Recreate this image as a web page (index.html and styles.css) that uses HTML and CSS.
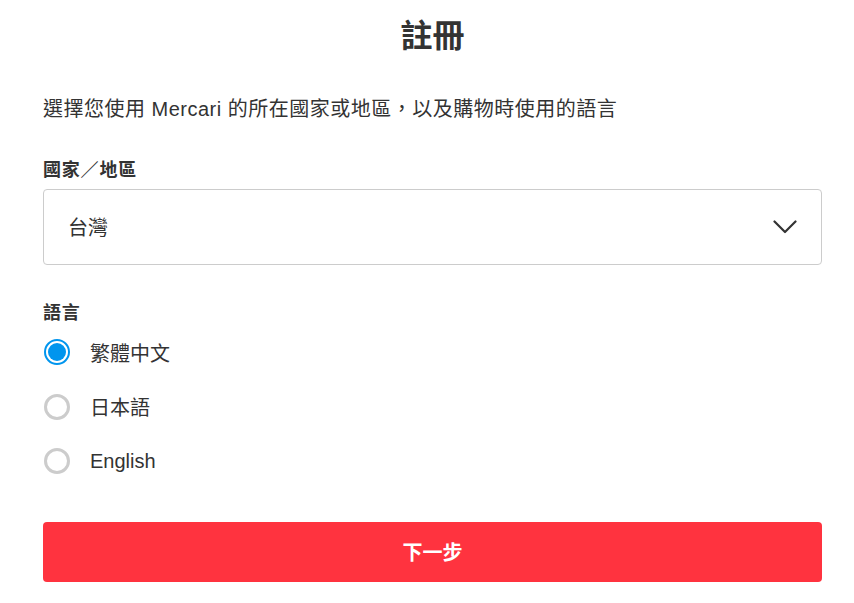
FILE: index.html
```html
<!DOCTYPE html>
<html lang="zh-Hant">
<head>
<meta charset="utf-8">
<title>註冊</title>
<link rel="stylesheet" href="styles.css">
</head>
<body>
<main class="page">
  <h1 class="title">註冊</h1>
  <p class="desc">選擇您使用 Mercari 的所在國家或地區，以及購物時使用的語言</p>

  <div class="field">
    <div class="label">國家／地區</div>
    <div class="select">
      <span class="select-value">台灣</span>
      <svg class="chevron" width="24" height="14" viewBox="0 0 24 14" aria-hidden="true">
        <path d="M1.5 1.5 L12 12 L22.5 1.5" fill="none" stroke="#333" stroke-width="2.2" stroke-linecap="round" stroke-linejoin="round"/>
      </svg>
    </div>
  </div>

  <div class="field lang">
    <div class="label">語言</div>
    <ul class="radios">
      <li class="radio-row"><span class="radio checked"></span><span class="radio-text">繁體中文</span></li>
      <li class="radio-row"><span class="radio"></span><span class="radio-text">日本語</span></li>
      <li class="radio-row"><span class="radio"></span><span class="radio-text">English</span></li>
    </ul>
  </div>

  <button class="next" type="button">下一步</button>
</main>
</body>
</html>
```
FILE: styles.css
```css
* { box-sizing: border-box; }
html, body { margin: 0; padding: 0; background: #fff; }
body {
  font-family: "Liberation Sans", "Noto Sans CJK TC", sans-serif;
  color: #333;
}
.page {
  padding: 12px 32px 0 43px;
  display: flex;
  flex-direction: column;
}
.title {
  margin: 0;
  text-align: center;
  font-size: 32px;
  line-height: 48px;
  font-weight: 700;
}
.desc {
  margin: 34px 0 0 0;
  font-size: 20px;
  line-height: 30px;
  letter-spacing: 0.5px;
}
.field { margin-top: 34px; }
.label {
  font-size: 18px;
  font-weight: 700;
  line-height: 24px;
  letter-spacing: 0.8px;
  margin-bottom: 7px;
}
.select {
  height: 76px;
  border: 1px solid #ccc;
  border-radius: 4px;
  display: flex;
  align-items: center;
  justify-content: space-between;
  padding: 0 24px 2px 24px;
}
.select-value { font-size: 20px; }
.chevron { display: block; margin-top: 2px; }
.lang { margin-top: 36px; }
.lang .label { margin-bottom: 0; }
.radios {
  list-style: none;
  margin: 0;
  padding: 0;
}
.radio-row {
  display: flex;
  align-items: center;
  height: 54.5px;
  gap: 20px;
}
.radio {
  width: 26px;
  height: 26px;
  border-radius: 50%;
  border: 3px solid #ccc;
  flex: none;
  margin-left: 1px;
}
.radio.checked {
  border: 2px solid #0095ee;
  padding: 2px;
  background: #0095ee content-box;
}
.radio-text { font-size: 20px; }
.next {
  margin-top: 33px;
  height: 60px;
  border: none;
  border-radius: 4px;
  background: #ff333f;
  color: #fff;
  font-family: inherit;
  font-size: 20px;
  font-weight: 700;
  cursor: pointer;
}
```
